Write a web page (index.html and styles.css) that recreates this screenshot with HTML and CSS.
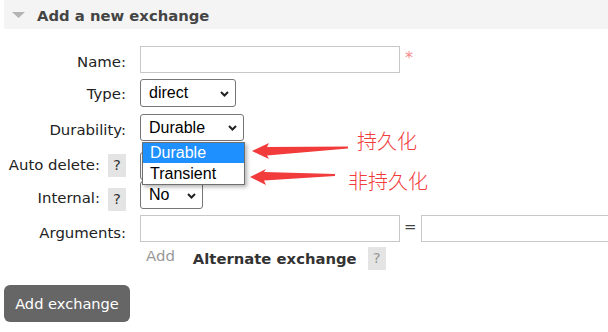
FILE: index.html
```html
<!DOCTYPE html>
<html>
<head>
<meta charset="utf-8">
<link rel="stylesheet" href="styles.css">
</head>
<body>
<div class="page">
  <div class="section">
    <div class="section-head">
      <svg class="tri" width="13" height="6" viewBox="0 0 13 6"><polygon points="0,0 13,0 6.5,6" fill="#b4b4b4"/></svg>
      <h2 class="title">Add a new exchange</h2>
    </div>
    <div class="form">
      <div class="lbl r-name">Name:</div>
      <div class="fld"><input class="text w-main" type="text"><span class="req">*</span></div>

      <div class="lbl r-type">Type:</div>
      <div class="fld"><div class="select w-type"><span>direct</span><svg class="chev" width="9" height="6" viewBox="0 0 9 6"><path d="M1 1 L4.5 4.5 L8 1" fill="none" stroke="#222" stroke-width="2"/></svg></div></div>

      <div class="lbl r-dur">Durability:</div>
      <div class="fld dur">
        <div class="select w-dur"><span>Durable</span><svg class="chev" width="9" height="6" viewBox="0 0 9 6"><path d="M1 1 L4.5 4.5 L8 1" fill="none" stroke="#222" stroke-width="2"/></svg></div>
        <div class="dropdown">
          <div class="opt sel">Durable</div>
          <div class="opt">Transient</div>
        </div>
      </div>

      <div class="lbl r-auto">Auto delete: <span class="help">?</span></div>
      <div class="fld"><div class="select w-no"><span>No</span><svg class="chev" width="9" height="6" viewBox="0 0 9 6"><path d="M1 1 L4.5 4.5 L8 1" fill="none" stroke="#222" stroke-width="2"/></svg></div></div>

      <div class="lbl r-int">Internal: <span class="help">?</span></div>
      <div class="fld"><div class="select w-no"><span>No</span><svg class="chev" width="9" height="6" viewBox="0 0 9 6"><path d="M1 1 L4.5 4.5 L8 1" fill="none" stroke="#222" stroke-width="2"/></svg></div></div>

      <div class="lbl r-args">Arguments:</div>
      <div class="fld"><input class="text w-main" type="text"><span class="eq">=</span><input class="text w-main" type="text"></div>

      <div class="lbl"></div>
      <div class="fld addrow"><span class="add">Add</span><span class="alt">Alternate exchange</span><span class="help light">?</span></div>
    </div>
    <button class="btn">Add exchange</button>
  </div>

  <svg class="arrows" width="608" height="332" viewBox="0 0 608 332">
    <polygon points="252,151 269,143 267,147 348,146.5 348,148.5 267,155.5 269,159" fill="#f23b3b"/>
    <polygon points="250,177 266,169 264,172 335,174 335,176 264,180.5 266,185" fill="#f23b3b"/>
  </svg>
  <span class="note note-1">持久化</span>
  <span class="note note-2">非持久化</span>
</div>
</body>
</html>
```

FILE: styles.css
```css
html, body {
  margin: 0;
  padding: 0;
  background: #fff;
}
body {
  font-family: "DejaVu Sans", Verdana, sans-serif;
  font-size: 14.9px;
  line-height: 17px;
  color: #222;
}
.page {
  position: relative;
  width: 608px;
  height: 332px;
  overflow: hidden;
}
.section {
  margin-left: 4px;
}
.section-head {
  height: 29px;
  background: #f4f4f4;
  display: flex;
  align-items: center;
  padding-left: 8px;
  gap: 12px;
}
.tri {
  display: block;
  margin-top: 1px;
}
.title {
  margin: 2px 0 0;
  font-size: 14.8px;
  line-height: 17px;
  font-weight: bold;
  color: #444;
}
.form {
  display: grid;
  grid-template-columns: 122px auto;
  grid-template-rows: 33px 35px 38px 29px 34px 32px 38px;
  column-gap: 14px;
  margin-top: 17px;
}
.lbl {
  display: flex;
  justify-content: flex-end;
  align-items: flex-start;
  gap: 8px;
  white-space: nowrap;
}
.r-name { padding-top: 8px; }
.r-type { padding-top: 7px; }
.r-dur { padding-top: 8px; }
.r-auto { padding-top: 5px; }
.r-auto .help { margin-top: -3px; }
.r-int { padding-top: 9px; }
.r-int .help { margin-top: -2px; }
.r-args { padding-top: 10px; }

.fld {
  display: flex;
  align-items: flex-start;
  white-space: nowrap;
}
.dur {
  position: relative;
}
.text {
  box-sizing: border-box;
  height: 27px;
  border: 1px solid #c8c8c8;
  border-radius: 0;
  margin: 0;
  padding: 0 4px;
  background: #fff;
  font: 16px "Liberation Sans", Arial, sans-serif;
}
.w-main { width: 260px; }
.req {
  color: #f78a8a;
  margin-left: 5px;
  padding-top: 3px;
  font-size: 16px;
}
.eq {
  color: #444;
  margin: 0 5px 0 4px;
  padding-top: 4px;
}
.select {
  box-sizing: border-box;
  display: flex;
  align-items: center;
  justify-content: space-between;
  height: 28px;
  border: 1px solid #767676;
  border-radius: 3px;
  padding: 0 6px 0 8px;
  background: #fff;
  font: 16px/18px "Liberation Sans", Arial, sans-serif;
  color: #000;
}
.chev {
  display: block;
  margin-top: 1px;
}
.w-type { width: 96px; }
.w-dur { width: 104px; height: 27px; }
.w-no { width: 63px; }

.dropdown {
  position: absolute;
  left: 2px;
  top: 28px;
  z-index: 2;
  box-sizing: border-box;
  width: 103px;
  border: 1px solid #6f6f6f;
  background: #fff;
  box-shadow: 2px 2px 4px rgba(0, 0, 0, 0.3);
  font: 16px "Liberation Sans", Arial, sans-serif;
  color: #000;
}
.opt {
  height: 21px;
  line-height: 21px;
  padding-left: 7px;
}
.opt.sel {
  height: 20px;
  line-height: 20px;
  background: #1e90ff;
  color: #fff;
}
.help {
  display: inline-block;
  width: 18px;
  height: 23px;
  line-height: 23px;
  text-align: center;
  background: #e4e4e4;
  color: #333;
}
.help.light {
  color: #999;
  margin-left: 11px;
}
.addrow .add {
  color: #999;
  margin-left: 6px;
  padding-top: 1px;
}
.addrow .alt {
  font-weight: bold;
  font-size: 14.8px;
  color: #333;
  margin-left: 18px;
  padding-top: 3px;
}
.btn {
  display: block;
  box-sizing: border-box;
  width: 126px;
  height: 37px;
  margin: 0;
  padding: 0;
  border: 0;
  border-radius: 6px;
  background: #666;
  color: #fff;
  font-family: "DejaVu Sans", Verdana, sans-serif;
  font-size: 14.6px;
  line-height: 17px;
}
.arrows {
  position: absolute;
  left: 0;
  top: 0;
  z-index: 3;
  pointer-events: none;
}
.note {
  position: absolute;
  z-index: 3;
  font-family: "Noto Sans CJK SC", sans-serif;
  font-weight: 300;
  font-size: 20px;
  line-height: 20px;
  color: #f23b3b;
  white-space: nowrap;
}
.note-1 { left: 357px; top: 131px; }
.note-2 { left: 348px; top: 171px; }
```
